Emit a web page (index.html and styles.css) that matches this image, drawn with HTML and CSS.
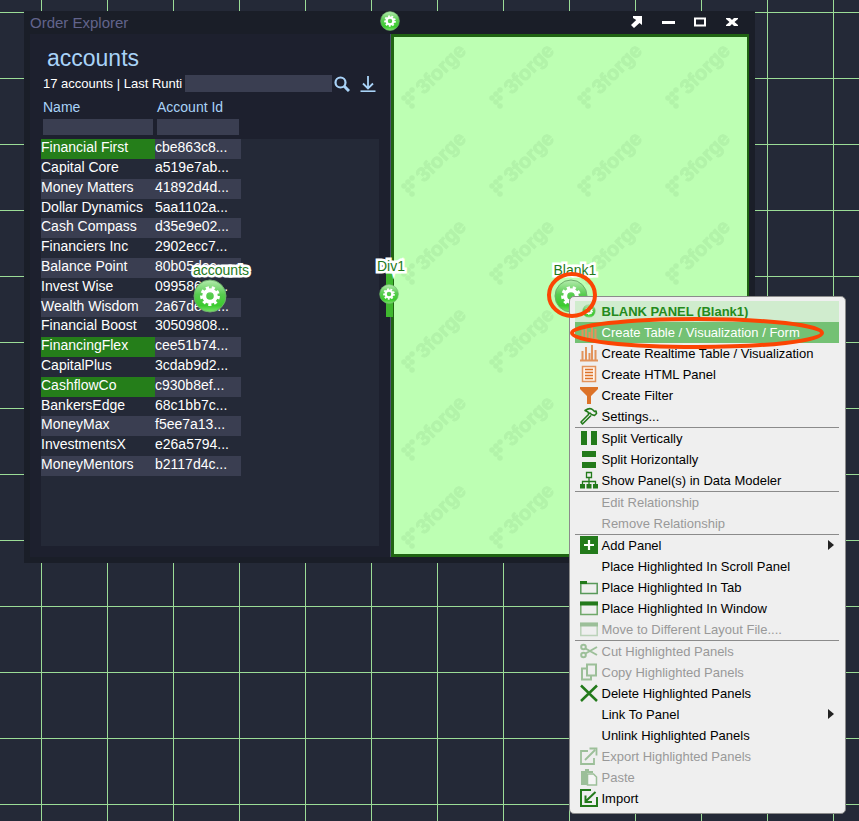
FILE: index.html
```html
<!DOCTYPE html>
<html lang="en">
<head>
<meta charset="utf-8">
<title>Order Explorer</title>
<link rel="stylesheet" href="styles.css">
</head>
<body>
<svg class="defs" aria-hidden="true">
  <defs>
    <linearGradient id="ball" x1="0" y1="0" x2="0" y2="1">
      <stop offset="0" stop-color="#b4ecae"/>
      <stop offset=".45" stop-color="#58cc50"/>
      <stop offset=".8" stop-color="#3ccb2e"/>
      <stop offset="1" stop-color="#7be66c"/>
    </linearGradient>
    <symbol id="gear" viewBox="0 0 34 34">
      <circle cx="17" cy="17" r="16" fill="url(#ball)" stroke="#6fae6c" stroke-width="1"/>
      <circle cx="17" cy="17" r="5.8" fill="none" stroke="#fff" stroke-width="4"/>
      <circle cx="17" cy="17" r="8.4" fill="none" stroke="#fff" stroke-width="3" stroke-dasharray="3.1 2.764"/>
    </symbol>
    <symbol id="chart" viewBox="0 0 18 18">
      <path d="M0 16.5h18M2.5 16V7M6 16V3M9.5 16V9M12 16V1M15.5 16V6" fill="none" stroke="#e2935c" stroke-width="2"/>
    </symbol>
    <symbol id="frame" viewBox="0 0 18 18">
      <path d="M.8 3.500h16.400v12H.8z" fill="none" stroke="#6fa869" stroke-width="1.500"/>
      <path d="M0 2.500h18v4H0z" fill="#237a1b"/>
    </symbol>
  </defs>
</svg>
<main class="desktop">
  <section class="window">
    <header class="titlebar">
      <h1>Order Explorer</h1>
      <svg class="gear-small title-gear" aria-hidden="true"><use href="#gear"/></svg>
      <div class="controls">
        <button aria-label="Pop out"><svg viewBox="0 0 14 12"><path d="M4 0h9v9L10.500 7 5 12 2 9 7.200 4 4 2z" fill="#fff"/></svg></button>
        <button aria-label="Minimize"><svg viewBox="0 0 14 12"><path d="M1 6.500h13" stroke="#fff" stroke-width="3"/></svg></button>
        <button aria-label="Maximize"><svg viewBox="0 0 14 12"><path d="M2 2.500h10v7H2z" fill="none" stroke="#fff" stroke-width="2"/></svg></button>
        <button aria-label="Close"><svg viewBox="0 0 14 12"><path d="M1 2h4l2 2 2-2h4v1L9.500 6 13 9v1H9L7 8l-2 2H1V9l3.500-3L1 3z" fill="#fff"/></svg></button>
      </div>
    </header>
    <div class="panels">
      <section class="accounts">
        <h2>accounts</h2>
        <div class="status">
          <span>17 accounts | Last Runti</span>
          <input class="field search" type="text" aria-label="Search">
          <button aria-label="Search accounts"><svg viewBox="0 0 16 16" fill="none" stroke="#a9d3f8"><circle cx="6.500" cy="6.500" r="5" stroke-width="2.200"/><path d="M10 10l5 5" stroke-width="3"/></svg></button>
          <button aria-label="Download"><svg viewBox="0 0 16 16" fill="none" stroke="#a9d3f8"><path d="M8 0v12M3 7.500l5 5 5-5" stroke-width="1.800"/><path d="M.5 15.200h15" stroke-width="1.600"/></svg></button>
        </div>
        <div class="filters">
          <label for="f-name">Name</label><label for="f-id">Account Id</label>
          <input class="field" id="f-name" type="text"><input class="field" id="f-id" type="text">
        </div>
        <div class="grid-body">
          <table>
            <tbody>
              <tr class="selected"><td>Financial First</td><td>cbe863c8...</td></tr>
              <tr><td>Capital Core</td><td>a519e7ab...</td></tr>
              <tr><td>Money Matters</td><td>41892d4d...</td></tr>
              <tr><td>Dollar Dynamics</td><td>5aa1102a...</td></tr>
              <tr><td>Cash Compass</td><td>d35e9e02...</td></tr>
              <tr><td>Financiers Inc</td><td>2902ecc7...</td></tr>
              <tr><td>Balance Point</td><td>80b05dec...</td></tr>
              <tr><td>Invest Wise</td><td>0995869c...</td></tr>
              <tr><td>Wealth Wisdom</td><td>2a67de3d...</td></tr>
              <tr><td>Financial Boost</td><td>30509808...</td></tr>
              <tr class="selected"><td>FinancingFlex</td><td>cee51b74...</td></tr>
              <tr><td>CapitalPlus</td><td>3cdab9d2...</td></tr>
              <tr class="selected"><td>CashflowCo</td><td>c930b8ef...</td></tr>
              <tr><td>BankersEdge</td><td>68c1bb7c...</td></tr>
              <tr><td>MoneyMax</td><td>f5ee7a13...</td></tr>
              <tr><td>InvestmentsX</td><td>e26a5794...</td></tr>
              <tr><td>MoneyMentors</td><td>b2117d4c...</td></tr>
            </tbody>
          </table>
        </div>
        <div class="marker">
          <svg class="gear-large" aria-hidden="true"><use href="#gear"/></svg>
          <span class="tag">accounts</span>
        </div>
        <div class="divider-grip">
          <svg class="gear-small" aria-hidden="true"><use href="#gear"/></svg>
          <span class="tag">Div1</span>
        </div>
      </section>
      <section class="blank">
        <svg class="watermark" aria-hidden="true">
          <defs>
            <pattern id="mark" width="88" height="88" patternUnits="userSpaceOnUse">
              <g fill="#b2f3a9">
                <circle cx="18" cy="53" r="2.800"/><circle cx="14" cy="57" r="2.800"/><circle cx="10" cy="61" r="2.800"/>
                <circle cx="18" cy="61" r="2.800"/><circle cx="14" cy="65" r="2.800"/><circle cx="18" cy="69" r="2.800"/>
                <text class="mark-text" transform="translate(30 58) rotate(-45)">3forge</text>
              </g>
            </pattern>
          </defs>
          <rect width="100%" height="100%" fill="url(#mark)"/>
        </svg>
        <div class="marker">
          <svg class="gear-large" aria-hidden="true"><use href="#gear"/></svg>
          <span class="tag">Blank1</span>
        </div>
        <div class="menu" role="menu">
          <button class="head" role="menuitem"><svg viewBox="-3 -3 24 24"><use href="#gear" width="18" height="18"/></svg>BLANK PANEL (Blank1)</button>
          <button class="active" role="menuitem"><svg><use href="#chart"/></svg>Create Table / Visualization / Form</button>
          <button role="menuitem"><svg><use href="#chart"/></svg>Create Realtime Table / Visualization</button>
          <button role="menuitem"><svg viewBox="0 0 18 18"><path d="M2.500 1.500h13v15h-13z" fill="#fff2e8" stroke="#e2935c" stroke-width="1.500"/><path d="M5 4.500h8M5 7.500h8M5 10.500h8M5 13.500h8" stroke="#dc7228" stroke-width="1.700"/></svg>Create HTML Panel</button>
          <button role="menuitem"><svg viewBox="0 0 18 18"><path d="M0 1h18v2l-7 7v8H7v-8L0 3z" fill="#dc7228"/></svg>Create Filter</button>
          <button role="menuitem"><svg viewBox="0 0 18 18" fill="none" stroke="#237a1b" stroke-width="1.600" stroke-linejoin="round"><path d="M5 3.500C8 1.500 11 1 13 3l1.500 1.500 1.500-.5.500 2.500-2 2-3-1-1.500-1.500-1.500.5L8 5zM9 7l-8 8 1.500 2L11 8.500"/></svg>Settings...</button>
          <hr>
          <button role="menuitem"><svg viewBox="0 0 18 18"><path d="M1 2h6v14H1zM11 2h6v14h-6z" fill="#237a1b"/></svg>Split Vertically</button>
          <button role="menuitem"><svg viewBox="0 0 18 18"><path d="M2 1h14v6H2zM2 12h14v6H2z" fill="#237a1b"/></svg>Split Horizontally</button>
          <button role="menuitem"><svg viewBox="0 0 18 18"><path d="M6.500 1.500h5v5h-5zM9 7v8M2.500 14v-3.500h13V14" fill="none" stroke="#237a1b" stroke-width="1.300"/><path d="M0 13h5v4.500H0zM6.500 13h5v4.500h-5zM13 13h5v4.500h-5z" fill="#237a1b"/></svg>Show Panel(s) in Data Modeler</button>
          <hr>
          <button disabled role="menuitem"><svg></svg>Edit Relationship</button>
          <button disabled role="menuitem"><svg></svg>Remove Relationship</button>
          <hr>
          <button role="menuitem"><svg viewBox="0 0 18 18"><path d="M0 0h18v18H0z" fill="#237a1b"/><path d="M9 4v10M4 9h10" stroke="#fff" stroke-width="2.200"/></svg>Add Panel<span class="arrow"></span></button>
          <button role="menuitem"><svg></svg>Place Highlighted In Scroll Panel</button>
          <button role="menuitem"><svg viewBox="0 0 18 18"><path d="M.8 5.500h16.400v10H.8z" fill="none" stroke="#58995a" stroke-width="1.500"/><path d="M0 3h7v3H0z" fill="#237a1b"/></svg>Place Highlighted In Tab</button>
          <button role="menuitem"><svg><use href="#frame"/></svg>Place Highlighted In Window</button>
          <button disabled role="menuitem"><svg><use href="#frame"/></svg>Move to Different Layout File....</button>
          <hr>
          <button disabled role="menuitem"><svg viewBox="0 0 18 18" fill="none" stroke="#237a1b" stroke-width="2"><circle cx="3.500" cy="5" r="2.300"/><circle cx="3.500" cy="13" r="2.300"/><path d="M5.500 6.500L17 13M5.500 11.500L17 5"/></svg>Cut Highlighted Panels</button>
          <button disabled role="menuitem"><svg viewBox="0 0 18 18" fill="none" stroke="#237a1b" stroke-width="2"><path d="M7 1.500h9v11H7zM6 5.500H2v11h9v-3"/></svg>Copy Highlighted Panels</button>
          <button role="menuitem"><svg viewBox="0 0 18 18"><path d="M1 1.500l16 15.500M17 1.500L1 17" stroke="#237a1b" stroke-width="2.500"/></svg>Delete Highlighted Panels</button>
          <button role="menuitem"><svg></svg>Link To Panel<span class="arrow"></span></button>
          <button role="menuitem"><svg></svg>Unlink Highlighted Panels</button>
          <button disabled role="menuitem"><svg viewBox="0 0 18 18" fill="none" stroke="#237a1b" stroke-width="1.800"><path d="M8 4H1v13h13v-6M5 13L15 3M9.500 1.500h7v7"/></svg>Export Highlighted Panels</button>
          <button disabled role="menuitem"><svg viewBox="0 0 18 18"><path d="M1 3h4V1h4v2h4v2H7v12H1z" fill="#237a1b"/><path d="M7.500 6h6l3 3v8h-9z" fill="#fff" stroke="#237a1b" stroke-width="1.500"/></svg>Paste</button>
          <button role="menuitem"><svg viewBox="0 0 18 18" fill="none" stroke="#237a1b" stroke-width="2"><path d="M11 1H1v16h16V8M15.500 3L6 12M5.500 6.500V13H12"/></svg>Import</button>
        </div>
        <svg class="callouts" viewBox="0 0 284 84" aria-hidden="true" fill="none" stroke="#fb4503" stroke-width="4">
          <ellipse cx="27" cy="26" rx="23" ry="21"/>
          <ellipse cx="152" cy="64" rx="125" ry="14"/>
        </svg>
      </section>
    </div>
  </section>
</main>
</body>
</html>
```
FILE: styles.css
```css
* { box-sizing: border-box; }

body {
  margin: 0;
  font-family: "Liberation Sans", Arial, sans-serif;
  font-size: 14px;
  color: #fff;
  background-color: #242937;
  background-image:
    linear-gradient(#9bdc96, #9bdc96),
    linear-gradient(#9bdc96, #9bdc96);
  background-size: 1px 66px, 66px 1px;
  background-repeat: space repeat, repeat space;
  background-image:
    repeating-linear-gradient(90deg, #9bdc96 0 1px, transparent 1px 66px),
    repeating-linear-gradient(#9bdc96 0 1px, transparent 1px 66px);
  background-size: 660px 660px;
  background-repeat: repeat;
  background-position: 41px 12px;
}

h1, h2 { margin: 0; font-weight: normal; }

button {
  padding: 0;
  border: 0;
  background: none;
  color: inherit;
  font: inherit;
  text-align: left;
}

.defs { position: absolute; width: 0; height: 0; }

.desktop { min-height: 100vh; padding: 11px 104px 0 24px; }

.window { padding: 0 6px 6px; background: #1a1e28; }

.titlebar {
  position: relative;
  display: flex;
  align-items: center;
  justify-content: space-between;
  height: 23px;
}
.titlebar h1 { font-size: 15px; color: #62648c; }
.title-gear { position: absolute; top: 0; left: 50%; margin-left: -10px; }

.controls { display: flex; gap: 18px; padding: 0 10px 2px 0; }
.controls button { width: 14px; height: 12px; }
.controls svg { display: block; width: 14px; height: 12px; }

.panels {
  display: grid;
  grid-template-columns: minmax(0, 361fr) minmax(0, 358fr);
}

.accounts {
  position: relative;
  padding: 10px 11px 11px;
  background: #1d202e;
  border-right: 1px solid #4c5070;
}
.accounts h2 {
  padding-left: 6px;
  font-size: 23px;
  line-height: 28px;
  color: #a9d3f8;
}

.field {
  min-width: 0;
  margin: 0;
  padding: 0;
  border: 0;
  background: #3a3e51;
  color: #fff;
}

.status {
  display: flex;
  align-items: center;
  height: 17px;
  margin: 3px 0 6px 2px;
  font-size: 13px;
  white-space: nowrap;
}
.status span { flex: none; width: 142px; }
.status .search { flex: 1; width: 0; height: 17px; }
.status button { flex: none; width: 16px; height: 16px; margin-left: 2px; }
.status button + button { margin: 0 3px 0 10px; }
.status svg { display: block; width: 16px; height: 16px; }

.filters {
  display: grid;
  grid-template-columns: 110px 82px;
  gap: 2px 4px;
  padding-left: 2px;
  line-height: 19px;
  color: #a9d3f8;
}
.filters .field { width: 100%; height: 16px; }

.grid-body {
  min-height: 407px;
  margin-top: 4px;
  background: #242937;
}

table { width: 200px; border-collapse: collapse; table-layout: fixed; }
tr { height: 20px; }
tr:nth-child(5n + 4) { height: 19px; }
tr:nth-child(odd) { background: #3a3e51; }
td { padding: 0; line-height: 17px; vertical-align: top; }
td:first-child { width: 114px; }
.selected td:first-child { background: #257e1a; }

.marker { position: absolute; top: 50%; left: 50%; }
.gear-large { position: absolute; top: -17px; left: -17px; width: 34px; height: 34px; }
.gear-small { width: 20px; height: 20px; }

.tag {
  position: absolute;
  bottom: 17px;
  left: -17px;
  line-height: 18px;
  color: #237a1b;
  paint-order: stroke fill;
  -webkit-text-stroke: 5px #fff;
}

.divider-grip {
  position: absolute;
  z-index: 1;
  top: 50%;
  right: -3px;
  width: 7px;
  height: 51px;
  margin-top: -30px;
  background: #3fb82f;
}
.divider-grip .gear-small { position: absolute; top: 18px; left: -7px; }
.divider-grip .tag { top: -9px; bottom: auto; left: -9px; }

.blank {
  position: relative;
  background: #bdffb3;
  border: 3px solid #1f6412;
  border-right-width: 2px;
}
.watermark { position: absolute; inset: 0; width: 100%; height: 100%; }
.mark-text {
  font-size: 20px;
  font-weight: bold;
  stroke: #b2f3a9;
  stroke-width: 1px;
}

.menu {
  position: absolute;
  top: 50%;
  left: 50%;
  width: 277px;
  margin-left: -2px;
  padding: 4px 6px 4px 5px;
  border: 1px solid #8b8b8b;
  border-radius: 5px;
  background: #efefef;
  color: #000;
  font-size: 13px;
}
.menu button {
  display: flex;
  align-items: center;
  gap: 4px;
  width: 100%;
  height: 21px;
  padding: 0 5px;
  white-space: nowrap;
}
.menu svg { flex: none; width: 18px; height: 18px; }
.menu hr { height: 1px; margin: 0; border: 0; background: #8b8b8b; }
.menu .head { background: #d0ecce; color: #258a1c; font-weight: bold; }
.menu .active { background: #74c174; color: #fff; }
.menu button:disabled { color: #999; }
.menu button:disabled svg { opacity: .4; }
.arrow {
  margin-left: auto;
  border: 5px solid transparent;
  border-right-width: 0;
  border-left: 6px solid #222;
}

.callouts {
  position: absolute;
  top: 50%;
  left: 50%;
  width: 284px;
  height: 84px;
  margin: -27px 0 0 -26px;
}
```
